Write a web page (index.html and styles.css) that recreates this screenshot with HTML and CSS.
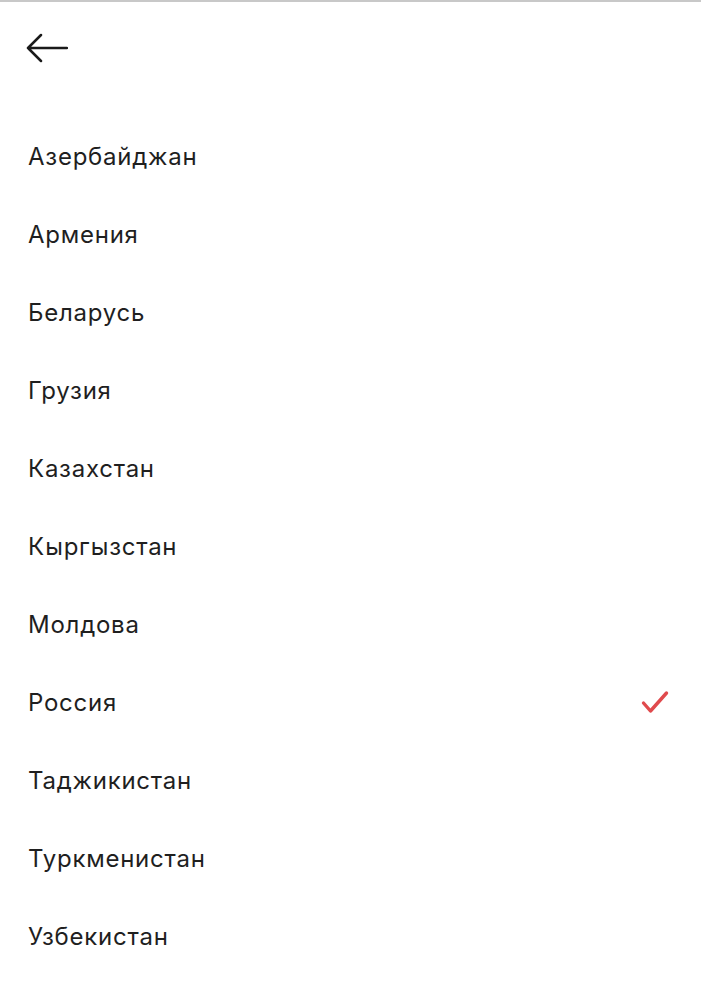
FILE: index.html
```html
<!DOCTYPE html>
<html lang="ru">
<head>
<meta charset="utf-8">
<link rel="stylesheet" href="styles.css">
</head>
<body>
<div class="screen">
  <header class="header">
    <button class="back" aria-label="Назад">
      <svg width="42" height="30" viewBox="0 0 42 30"><path d="M41 15H2M15 2L2 15l13 13" fill="none" stroke="#1a1a1a" stroke-width="2.5" stroke-linecap="round" stroke-linejoin="round"/></svg>
    </button>
  </header>
  <ul class="list">
    <li class="item">Азербайджан</li>
    <li class="item">Армения</li>
    <li class="item">Беларусь</li>
    <li class="item">Грузия</li>
    <li class="item">Казахстан</li>
    <li class="item">Кыргызстан</li>
    <li class="item">Молдова</li>
    <li class="item selected">Россия
      <svg class="check" width="28" height="24" viewBox="0 0 28 24"><path d="M2.5 13l7 8L25.5 3" fill="none" stroke="#e04a4d" stroke-width="3.4" stroke-linecap="round" stroke-linejoin="round"/></svg>
    </li>
    <li class="item">Таджикистан</li>
    <li class="item">Туркменистан</li>
    <li class="item">Узбекистан</li>
  </ul>
</div>
</body>
</html>
```
FILE: styles.css
```css
html, body {
  margin: 0;
  padding: 0;
  background: #fff;
}
.screen {
  width: 701px;
  height: 1000px;
  border-top: 2px solid #c8c8c8;
  box-sizing: border-box;
  font-family: Inter, "Noto Sans", sans-serif;
  color: #1f1f1f;
  overflow: hidden;
}
.header {
  height: 115px;
  display: flex;
  align-items: flex-start;
  padding: 31px 0 0 26px;
  box-sizing: border-box;
}
.back {
  border: 0;
  background: none;
  padding: 0;
  display: flex;
}
.list {
  list-style: none;
  margin: 0;
  padding: 0;
}
.item {
  height: 78px;
  display: flex;
  align-items: center;
  justify-content: space-between;
  padding: 0 32px 0 28px;
  font-size: 24px;
  letter-spacing: 0.75px;
}
.check {
  display: block;
}
```
